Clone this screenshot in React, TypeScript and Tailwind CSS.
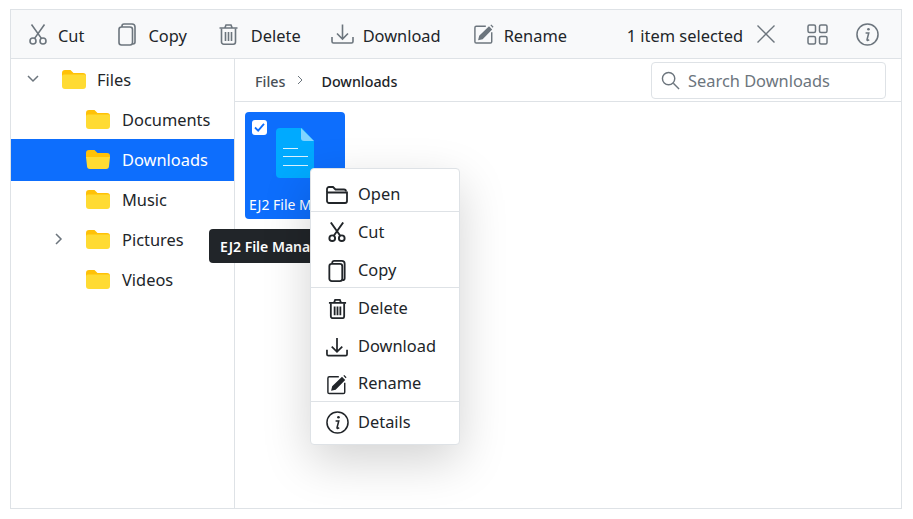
import React from "react";

type IconProps = { className?: string };

const CutIcon = ({ className }: IconProps) => (
  <svg viewBox="0 0 18 21" fill="none" stroke="currentColor" strokeWidth="1.6" className={className}>
    <circle cx="4" cy="17" r="3" />
    <circle cx="14" cy="17" r="3" />
    <path d="M5.600 14.400 15.500.5M12.400 14.400 2.500.5" />
  </svg>
);

const CopyIcon = ({ className }: IconProps) => (
  <svg viewBox="0 0 18 23" fill="none" stroke="currentColor" strokeWidth="1.6" className={className}>
    <rect x="1" y="4" width="13.500" height="18" rx="2.500" />
    <path d="M4 4V3a2 2 0 0 1 2-2h8a3 3 0 0 1 3 3v15a2 2 0 0 1-2 2h-.5" />
  </svg>
);

const DeleteIcon = ({ className }: IconProps) => (
  <svg viewBox="0 0 19 21" fill="none" stroke="currentColor" strokeWidth="1.6" className={className}>
    <path d="M.5 4h18M6 3.500 7 1h5l1 2.500" />
    <path d="M2.500 4.500V18a2.200 2.200 0 0 0 2.200 2.200h9.600a2.200 2.200 0 0 0 2.200-2.200V4.500" />
    <path d="M6.500 8v9M9.500 8v9M12.500 8v9" />
  </svg>
);

const DownloadIcon = ({ className }: IconProps) => (
  <svg viewBox="0 0 23 20" fill="none" stroke="currentColor" strokeWidth="1.6" className={className}>
    <path d="M11.500.5v14M6 9.500l5.500 5.500L17 9.500" />
    <path d="M1 13v4.500A1.500 1.500 0 0 0 2.500 19h18a1.500 1.500 0 0 0 1.500-1.500V13" />
  </svg>
);

const RenameIcon = ({ className }: IconProps) => (
  <svg viewBox="0 0 22 22" fill="none" className={className}>
    <path d="M13 2.500H2.500a1.500 1.500 0 0 0-1.500 1.500v15.500A1.500 1.500 0 0 0 2.500 21H18a1.500 1.500 0 0 0 1.500-1.500V9" stroke="currentColor" strokeWidth="1.6" />
    <path d="M4.500 18l1.200-5L16.500 2.500l3.500 3.500L9.500 16.800z M18 1.500l1-1 2.500 2.500-1 1z" fill="currentColor" />
  </svg>
);

const InfoIcon = ({ className }: IconProps) => (
  <svg viewBox="0 0 24 24" fill="none" className={className}>
    <circle cx="12" cy="12" r="11" stroke="currentColor" strokeWidth="1.6" />
    <circle cx="13" cy="6.500" r="1.400" fill="currentColor" />
    <path d="M10 10.500h3.300l-1.800 7c-.1.500.3.800 1 .6l1.300-.6" stroke="currentColor" strokeWidth="1.600" />
  </svg>
);

const OpenIcon = ({ className }: IconProps) => (
  <svg viewBox="0 0 22 18" fill="none" stroke="currentColor" strokeWidth="1.500" className={className}>
    <path d="M1 6V3a2 2 0 0 1 2-2h4l2.500 2.500H18a2 2 0 0 1 2 2" />
    <path d="M1 6.500h20v8.500a2 2 0 0 1-2 2H3a2 2 0 0 1-2-2z" />
  </svg>
);

const FolderIcon = ({ open = false, className }: IconProps & { open?: boolean }) => (
  <svg viewBox="0 0 24 19" className={className}>
    <path d="M0 3a3 3 0 0 1 3-3h5.500l3 3H21a3 3 0 0 1 3 3v2H0z" fill="#ffc107" />
    <path
      d={open ? "M0 7h24l-1 9a3 3 0 0 1-3 3H4a3 3 0 0 1-3-3z" : "M0 6.500a2 2 0 0 1 2-2h20a2 2 0 0 1 2 2V16a3 3 0 0 1-3 3H3a3 3 0 0 1-3-3z"}
      fill="#ffdb33"
    />
  </svg>
);

const toolbarItems = [
  { label: "Cut", icon: <CutIcon className="w-[18px] h-[21px]" />, cls: "gap-[11px] mr-[34px]" },
  { label: "Copy", icon: <CopyIcon className="w-[18px] h-[23px]" />, cls: "gap-[12px] mr-[32px]" },
  { label: "Delete", icon: <DeleteIcon className="w-[19px] h-[21px]" />, cls: "gap-[13px] mr-[30px]" },
  { label: "Download", icon: <DownloadIcon className="w-[23px] h-[20px]" />, cls: "gap-[9px] mr-[33px]" },
  { label: "Rename", icon: <RenameIcon className="w-[20px] h-[20px]" />, cls: "gap-[10px]" },
];

const treeItems = [
  { label: "Documents" },
  { label: "Downloads", selected: true },
  { label: "Music" },
  { label: "Pictures", expandable: true },
  { label: "Videos" },
];

const menuGroups = [
  [{ label: "Open", icon: <OpenIcon className="w-[22px] h-[18px] stroke-[1.8]" />, row: "pt-[6px]", text: "" }],
  [
    { label: "Cut", icon: <CutIcon className="w-[18px] h-[20px] stroke-[2]" />, row: "pt-[4px]", text: "" },
    { label: "Copy", icon: <CopyIcon className="w-[18px] h-[22px] stroke-[1.9]" />, row: "pt-[6px]", text: "pb-[2px]" },
  ],
  [
    { label: "Delete", icon: <DeleteIcon className="w-[19px] h-[20px] stroke-[1.9]" />, row: "pt-[4px]", text: "" },
    { label: "Download", icon: <DownloadIcon className="w-[22px] h-[20px] stroke-[1.8]" />, row: "pt-[6px]", text: "pb-[2px]" },
    { label: "Rename", icon: <RenameIcon className="w-[20px] h-[21px]" />, row: "pt-[6px]", text: "pb-[2px]" },
  ],
  [{ label: "Details", icon: <InfoIcon className="w-[23px] h-[23px]" />, row: "pt-[5px]", text: "pb-[2px]" }],
];

export default function App() {
  return (
    <div className="w-[913px] h-[519px] bg-white pt-[9px] pl-[10px] font-['Noto_Sans','Open_Sans',sans-serif] text-[16.4px] text-[#212529] overflow-hidden">
      <div className="relative w-[892px] h-[500px] border border-[#dee2e6] flex flex-col">
        {/* toolbar */}
        <div className="h-[49px] shrink-0 bg-[#f8f9fa] border-b border-[#dee2e6] flex items-center pl-[18px] pr-[22px]">
          {toolbarItems.map((item) => (
            <div key={item.label} className={`flex items-center ${item.cls}`}>
              <span className="text-[#6c757d] flex">{item.icon}</span>
              <span className="leading-[24px] pt-[3px]">{item.label}</span>
            </div>
          ))}
          <div className="ml-auto flex items-center">
            <span className="leading-[24px] pt-[3px]">1 item selected</span>
            <svg viewBox="0 0 18 18" fill="none" stroke="currentColor" strokeWidth="1.400" className="w-[18px] h-[18px] ml-[14px] text-[#6c757d]">
              <path d="M.5.5l17 17M17.500.5l-17 17" />
            </svg>
            <svg viewBox="0 0 21 21" fill="none" stroke="currentColor" strokeWidth="1.500" className="w-[21px] h-[21px] ml-[32px] text-[#6c757d]">
              <rect x="1" y="1" width="7.500" height="7.500" rx="1.500" />
              <rect x="12.500" y="1" width="7.500" height="7.500" rx="1.500" />
              <rect x="1" y="12.500" width="7.500" height="7.500" rx="1.500" />
              <rect x="12.500" y="12.500" width="7.500" height="7.500" rx="1.500" />
            </svg>
            <InfoIcon className="w-[23px] h-[23px] ml-[28px] text-[#6c757d]" />
          </div>
        </div>

        <div className="flex flex-1 min-h-0">
          {/* tree */}
          <div className="w-[224px] shrink-0 border-r border-[#dee2e6]">
            <div className="h-[40px] flex items-center">
              <svg viewBox="0 0 12 8" fill="none" stroke="currentColor" strokeWidth="1.500" className="w-[12px] h-[8px] ml-[16px] text-[#6c757d]">
                <path d="M1 1l5 5 5-5" />
              </svg>
              <FolderIcon className="w-[24px] h-[19px] ml-[23px]" />
              <span className="ml-[11px] pt-[2px]">Files</span>
            </div>
            {treeItems.map((item) => (
              <div
                key={item.label}
                className={`flex items-center ${item.selected ? "bg-[#0d6efd] text-white h-[42px] pb-[2px] -mb-[2px]" : "h-[40px]"}`}
              >
                <span className="w-[52px] flex justify-end shrink-0">
                  {item.expandable && (
                    <svg viewBox="0 0 8 12" fill="none" stroke="currentColor" strokeWidth="1.500" className="w-[8px] h-[12px] text-[#6c757d]">
                      <path d="M1 1l5 5-5 5" />
                    </svg>
                  )}
                </span>
                <FolderIcon open={item.selected} className="w-[24px] h-[19px] ml-[23px]" />
                <span className="ml-[12px] pt-[2px]">{item.label}</span>
              </div>
            ))}
          </div>

          {/* content */}
          <div className="flex-1 flex flex-col min-w-0">
            <div className="h-[43px] shrink-0 border-b border-[#dee2e6] flex items-center pl-[20px] pr-[15px] text-[14.300px] font-medium">
              <span className="text-[#495057] pt-[3px]">Files</span>
              <svg viewBox="0 0 6 10" fill="none" stroke="currentColor" strokeWidth="1" className="w-[6px] h-[10px] ml-[12px] text-[#6c757d]">
                <path d="M1 1l4 4-4 4" />
              </svg>
              <span className="ml-[18px] pt-[3px]">Downloads</span>
              <div className="ml-auto w-[235px] h-[37px] rounded-[4px] border border-[#dee2e6] flex items-center pl-[9px] text-[16.400px] font-normal text-[#6c757d] bg-white">
                <svg viewBox="0 0 20 20" fill="none" stroke="currentColor" strokeWidth="1.500" className="w-[19px] h-[19px]">
                  <circle cx="8" cy="8" r="6.500" />
                  <path d="M13 13l6 6" />
                </svg>
                <span className="ml-[8px] pt-[3px]">Search Downloads</span>
              </div>
            </div>

            <div className="pt-[10px] pl-[10px]">
              <div className="relative w-[100px] h-[107px] rounded-[4px] bg-[#0d6efd]">
                <div className="absolute left-[7px] top-[8px] w-[15px] h-[15px] rounded-[3px] bg-white flex items-center justify-center">
                  <svg viewBox="0 0 12 10" fill="none" stroke="#0d6efd" strokeWidth="2" className="w-[11px] h-[9px]">
                    <path d="M1 5l3.500 3.500L11 1" />
                  </svg>
                </div>
                <svg viewBox="0 0 38 50" className="absolute left-[31px] top-[16px] w-[38px] h-[50px]">
                  <path d="M4 0h22l12 13v33a4 4 0 0 1-4 4H4a4 4 0 0 1-4-4V4a4 4 0 0 1 4-4z" fill="#00aaff" />
                  <path d="M25 0l13 13H28a3 3 0 0 1-3-3z" fill="#80d4ff" />
                  <path d="M7 20.500h15M7 28.500h25M7 37.500h25" stroke="#ffffff" strokeOpacity="0.85" strokeWidth="1.200" />
                </svg>
                <span className="absolute left-[4px] top-[83px] text-[14px] leading-[20px] text-white whitespace-nowrap">EJ2 File Manager</span>
              </div>
            </div>
          </div>
        </div>

        {/* tooltip */}
        <div className="absolute left-[198px] top-[219px] w-[130px] h-[34px] rounded-[4px] bg-[#212529] text-white text-[14px] font-semibold flex items-center pl-[11px] whitespace-nowrap">
          EJ2 File Manager
        </div>

        {/* context menu */}
        <div className="absolute left-[299px] top-[158px] w-[150px] rounded-[4px] border border-[#dee2e6] bg-white pt-[4px] pb-[5px] shadow-[0_16px_48px_rgba(0,0,0,0.175)]">
          {menuGroups.map((group, i) => (
            <div key={i} className={i > 0 ? "border-t border-[#dee2e6]" : ""}>
              {group.map((item) => (
                <div key={item.label} className={`h-[37.600px] flex items-center text-[#212529] ${item.row}`}>
                  <span className="w-[47px] flex justify-center shrink-0 pl-[5px]">{item.icon}</span>
                  <span className={item.text}>{item.label}</span>
                </div>
              ))}
            </div>
          ))}
        </div>
      </div>
    </div>
  );
}
